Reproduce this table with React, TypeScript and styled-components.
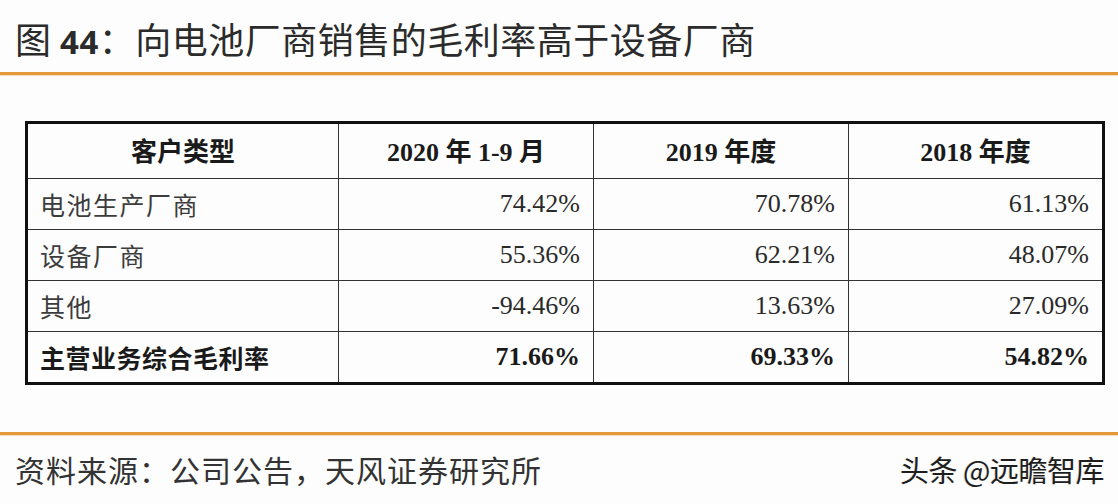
import styled, { createGlobalStyle } from "styled-components";

const GlobalStyle = createGlobalStyle`
  html, body {
    margin: 0;
    padding: 0;
    background: #fdfdfd;
  }
`;

interface RowData {
  label: string;
  values: string[];
  total?: boolean;
}

const rows: RowData[] = [
  { label: "电池生产厂商", values: ["74.42%", "70.78%", "61.13%"] },
  { label: "设备厂商", values: ["55.36%", "62.21%", "48.07%"] },
  { label: "其他", values: ["-94.46%", "13.63%", "27.09%"] },
  { label: "主营业务综合毛利率", values: ["71.66%", "69.33%", "54.82%"], total: true },
];

const App = () => {
  return (
    <>
      <GlobalStyle />
      <Page>
        <TitleBar>
          <Title>
            图 <TitleNum>44</TitleNum>：向电池厂商销售的毛利率高于设备厂商
          </Title>
        </TitleBar>
        <OrangeRule />
        <TableWrap>
          <Table>
            <colgroup>
              <col style={{ width: 312 }} />
              <col style={{ width: 255 }} />
              <col style={{ width: 255 }} />
              <col style={{ width: 255 }} />
            </colgroup>
            <thead>
              <tr>
                <HeadCell>客户类型</HeadCell>
                <HeadCell>2020 年 1-9 月</HeadCell>
                <HeadCell>2019 年度</HeadCell>
                <HeadCell>2018 年度</HeadCell>
              </tr>
            </thead>
            <tbody>
              {rows.map((r) => (
                <BodyRow key={r.label} $total={r.total}>
                  <LabelCell $bold={r.total}>{r.label}</LabelCell>
                  {r.values.map((v, i) => (
                    <NumCell key={i} $bold={r.total}>{v}</NumCell>
                  ))}
                </BodyRow>
              ))}
            </tbody>
          </Table>
        </TableWrap>
        <OrangeRule />
        <Footer>
          <Source>资料来源：公司公告，天风证券研究所</Source>
          <Watermark>头条 @远瞻智库</Watermark>
        </Footer>
      </Page>
    </>
  );
};

const Page = styled.div`
  width: 1118px;
  height: 504px;
  display: flex;
  flex-direction: column;
  overflow: hidden;
  background: #fdfdfd;
`;

const TitleBar = styled.div`
  height: 72px;
  display: flex;
  align-items: center;
  padding-left: 15px;
`;

const Title = styled.div`
  font-family: "Noto Sans CJK SC", "Noto Sans", sans-serif;
  font-size: 36px;
  color: #2b2b2b;
  letter-spacing: 0.5px;
  white-space: nowrap;
  margin-top: 4px;
`;

const TitleNum = styled.span`
  font-family: "Noto Sans", "Noto Sans CJK SC", sans-serif;
  font-weight: 700;
  font-size: 33px;
`;

const OrangeRule = styled.div`
  height: 3px;
  flex-shrink: 0;
  background: #e3993a;
  box-shadow: 0 1px 1px rgba(240, 180, 100, 0.5);
`;

const TableWrap = styled.div`
  padding: 46px 16px 47px 25px;
`;

const Table = styled.table`
  border-collapse: collapse;
  table-layout: fixed;
  width: 1077px;
  border: 3px solid #111;
`;

const HeadCell = styled.th`
  height: 51px;
  padding: 0 0 3px;
  font-family: "Liberation Serif", "Noto Sans CJK SC", serif;
  font-size: 26px;
  font-weight: 700;
  color: #1a1a1a;
  text-align: center;
  border: 1.5px solid #333;
  border-top: none;
`;

const BodyRow = styled.tr<{ $total?: boolean }>`
  height: ${(p) => (p.$total ? "52px" : "51px")};
`;

const LabelCell = styled.td<{ $bold?: boolean }>`
  padding: 0 0 0 12px;
  font-family: "Noto Sans CJK SC", sans-serif;
  font-size: 25px;
  font-weight: ${(p) => (p.$bold ? 700 : 400)};
  color: ${(p) => (p.$bold ? "#1a1a1a" : "#3c3c3c")};
  letter-spacing: ${(p) => (p.$bold ? "0.5px" : "1.5px")};
  border: 1.5px solid #333;
  white-space: nowrap;
`;

const NumCell = styled.td<{ $bold?: boolean }>`
  padding: 0 13px 0 0;
  text-align: right;
  font-family: "Liberation Serif", serif;
  font-size: 26px;
  font-weight: ${(p) => (p.$bold ? 700 : 400)};
  color: ${(p) => (p.$bold ? "#1a1a1a" : "#2a2a2a")};
  border: 1.5px solid #333;
`;

const Footer = styled.div`
  flex: 1;
  display: flex;
  align-items: center;
  justify-content: space-between;
  padding: 0 14px 2px 15px;
`;

const Source = styled.div`
  font-family: "Noto Sans CJK SC", sans-serif;
  font-size: 30px;
  color: #333;
  letter-spacing: 1px;
`;

const Watermark = styled.div`
  font-family: "Noto Sans CJK SC", sans-serif;
  font-size: 29px;
  color: #1e1e1e;
  letter-spacing: -0.5px;
  text-shadow: 1px 1px 0 #fff, -1px 0 0 #ddd;
`;

export default App;
